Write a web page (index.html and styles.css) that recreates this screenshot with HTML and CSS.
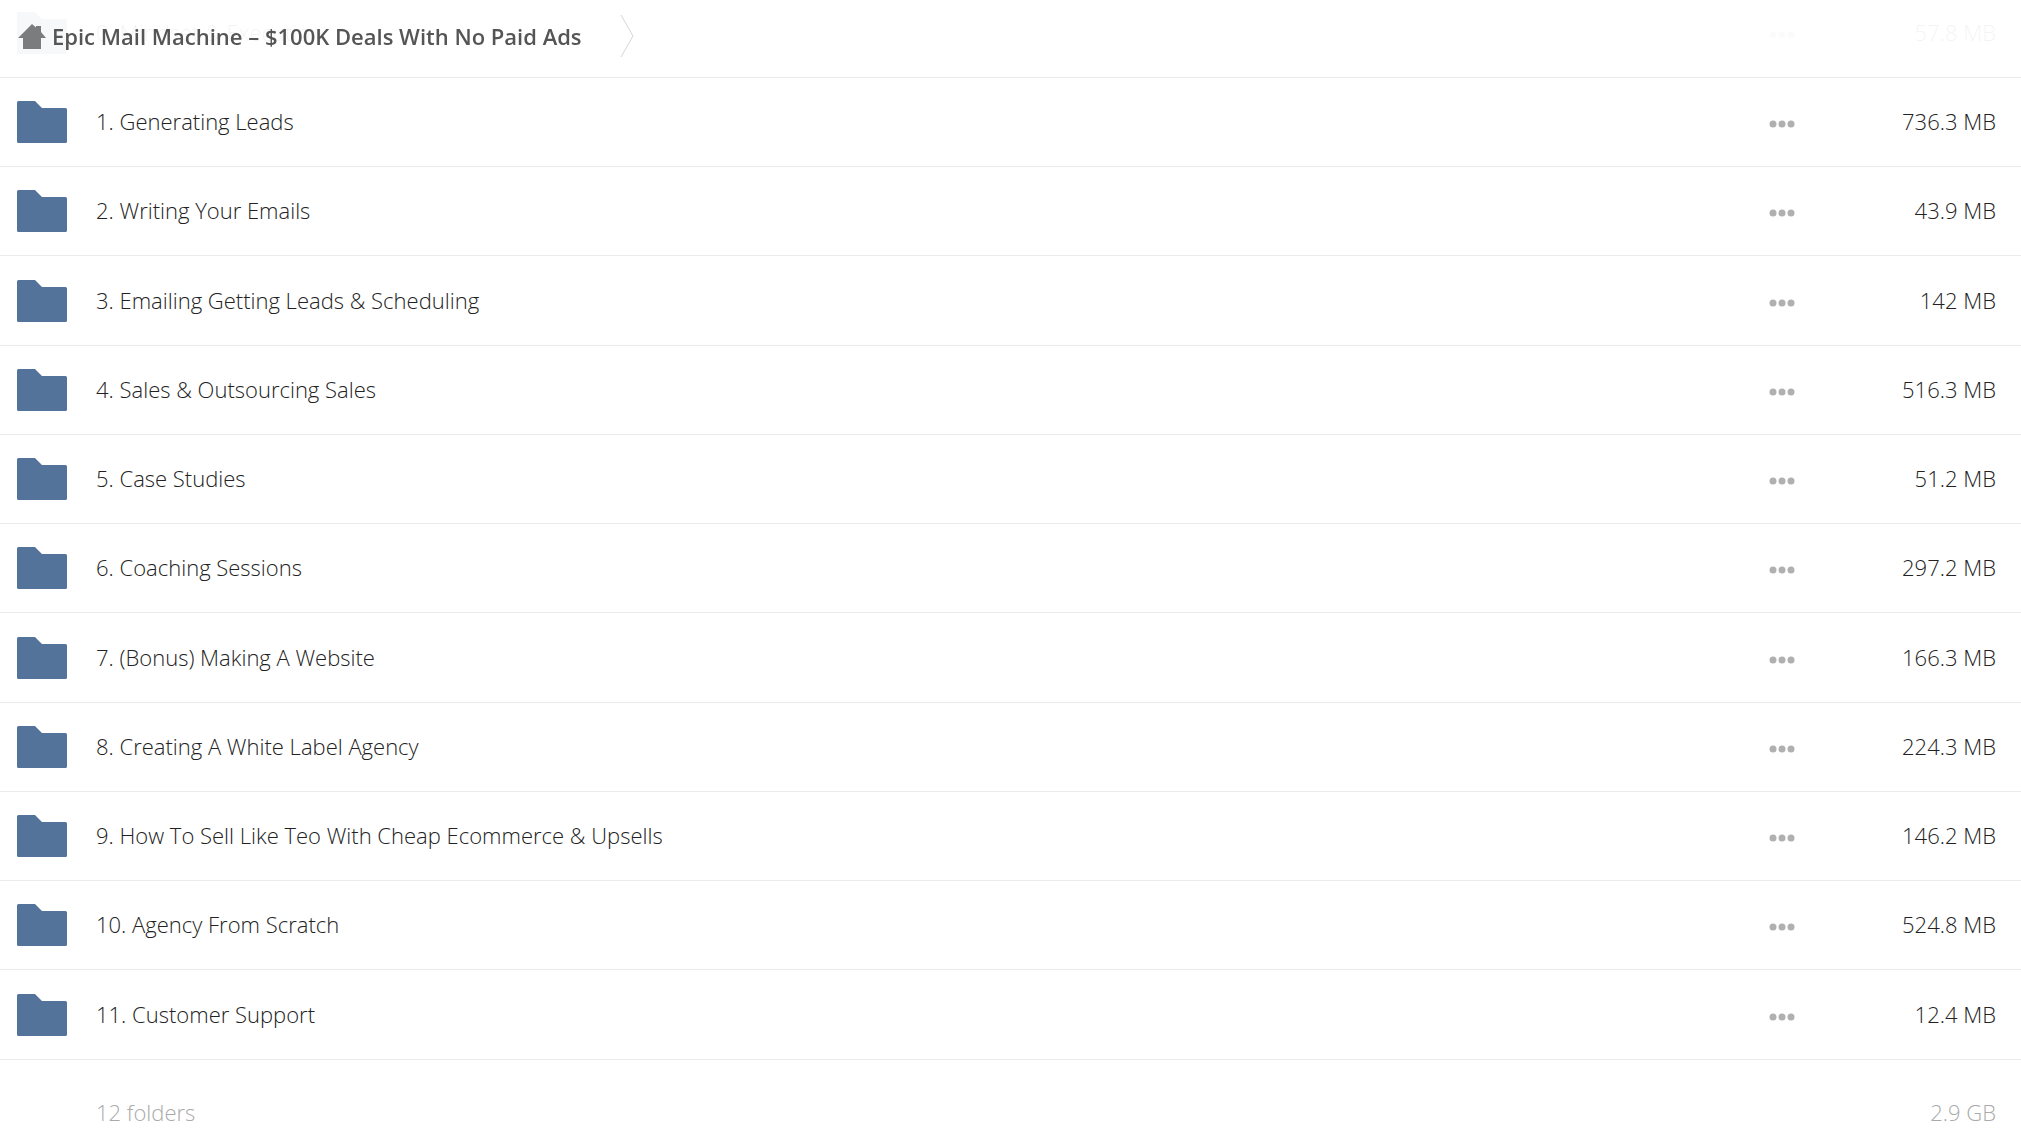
FILE: index.html
```
<!DOCTYPE html>
<html lang="en">
<head>
  <meta charset="UTF-8" />
  <meta name="viewport" content="width=device-width, initial-scale=1.0"/>
  <title>Epic Mail Machine – $100K Deals With No Paid Ads</title>
  <link rel="stylesheet" href="styles.css">
</head>

<body>
  <svg class="sprite" aria-hidden="true">
    <symbol id="folder" viewBox="0 0 50 42">
      <path d="M1.500 0H18L25 7H48.500Q50 7 50 8.500V40.500Q50 42 48.500 42H1.500Q0 42 0 40.500V1.500Q0 0 1.500 0Z"/>
    </symbol>
    <symbol id="dots" viewBox="0 0 26 8">
      <circle cx="4" cy="4" r="3.500"/>
      <circle cx="13" cy="4" r="3.500"/>
      <circle cx="22" cy="4" r="3.500"/>
    </symbol>
  </svg>

  <header>
    <a href="#" class="crumb">
      <svg class="home-icon" viewBox="0 0 28 25" aria-hidden="true">
        <path d="M14 0L18 3.500V2H23V8L28 14H23V25H5V14H0Z"/>
      </svg>
      <span>Epic Mail Machine – $100K Deals With No Paid Ads</span>
    </a>
    <svg class="crumb-arrow" viewBox="0 0 14 42" aria-hidden="true">
      <path d="M1 0L13 21L1 42"/>
    </svg>
  </header>

  <main>
    <ul class="file-list" id="fileList"></ul>
    <div class="summary">
      <span>12 folders</span>
      <span>2.9 GB</span>
    </div>
  </main>

  <script>
    const folders = [
      ["0. Mindset & Execution", "57.8 MB"],
      ["1. Generating Leads", "736.3 MB"],
      ["2. Writing Your Emails", "43.9 MB"],
      ["3. Emailing Getting Leads & Scheduling", "142 MB"],
      ["4. Sales & Outsourcing Sales", "516.3 MB"],
      ["5. Case Studies", "51.2 MB"],
      ["6. Coaching Sessions", "297.2 MB"],
      ["7. (Bonus) Making A Website", "166.3 MB"],
      ["8. Creating A White Label Agency", "224.3 MB"],
      ["9. How To Sell Like Teo With Cheap Ecommerce & Upsells", "146.2 MB"],
      ["10. Agency From Scratch", "524.8 MB"],
      ["11. Customer Support", "12.4 MB"]
    ];
    const fileList = document.getElementById("fileList");

    folders.forEach(([name, size]) => {
      const row = document.createElement("li");
      row.className = "file-row";
      row.innerHTML = `
        <svg class="folder-icon" aria-hidden="true"><use href="#folder"/></svg>
        <a href="#" class="file-name"></a>
        <button class="more-btn" aria-label="More actions"><svg><use href="#dots"/></svg></button>
        <span class="file-size"></span>`;
      row.querySelector(".file-name").textContent = name;
      row.querySelector(".file-size").textContent = size;
      fileList.appendChild(row);
    });
  </script>
</body>
</html>
```
FILE: styles.css
```
* {
  box-sizing: border-box;
}

body {
  margin: 0;
  background: white;
  color: #222;
  font-family: "Open Sans", sans-serif;
  font-size: 22px;
  font-weight: 300;
  line-height: 30px;
  overflow: hidden;
}

.sprite {
  display: none;
}

/* breadcrumb bar, the list shows faintly through it */
header {
  position: fixed;
  top: 0;
  left: 0;
  right: 0;
  z-index: 10;
  height: 78px;
  padding: 0 18px 5px;
  display: flex;
  align-items: center;
  gap: 38px;
  background: rgba(255, 255, 255, 0.95);
  border-bottom: 1px solid #ebebeb;
}

.crumb {
  display: flex;
  align-items: center;
  gap: 6px;
  color: #555;
  font-weight: 600;
  text-decoration: none;
}

.home-icon {
  width: 28px;
  height: 25px;
  fill: #7b7c7e;
}

.crumb-arrow {
  width: 14px;
  height: 42px;
  fill: none;
  stroke: #d6d6d6;
}

/* list of folders */
.file-list {
  margin: -11px 0 0;
  padding: 0;
  list-style: none;
}

.file-row {
  height: 89px;
  padding: 0 25px 0 17px;
  display: flex;
  align-items: center;
  border-bottom: 1px solid #ebebeb;
}

.file-row:nth-child(4n) {
  height: 90px;
}

.folder-icon {
  width: 50px;
  height: 42px;
  margin-right: 29px;
  fill: #54739b;
}

.file-name {
  flex: 1;
  padding-bottom: 2px;
  color: inherit;
  text-decoration: none;
}

.more-btn {
  padding: 4px 0 0;
  border: none;
  background: none;
  cursor: pointer;
}

.more-btn svg {
  display: block;
  width: 26px;
  height: 8px;
  fill: #b0b0b0;
}

.file-size {
  width: 201px;
  padding-bottom: 2px;
  text-align: right;
}

/* totals under the list */
.summary {
  display: flex;
  justify-content: space-between;
  padding: 37px 25px 18px 96px;
  color: #aaa;
}
```
